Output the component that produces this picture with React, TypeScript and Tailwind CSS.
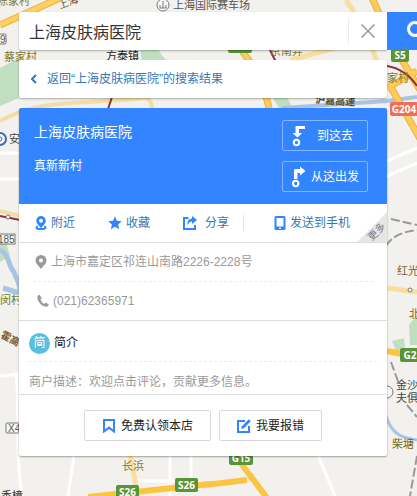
import type { ReactNode } from "react";

type IconProps = { className?: string };

function PlaceIcon({ className }: IconProps) {
  return (
    <svg viewBox="0 0 12 14" className={className} aria-hidden="true">
      <path
        fill="currentColor"
        fillRule="evenodd"
        d="M6 0a4.800 4.800 0 0 1 4.800 4.800C10.800 7.500 8 9.500 6 12 4 9.500 1.200 7.500 1.200 4.800A4.800 4.800 0 0 1 6 0Zm0 2.700a2 2 0 1 0 0 4 2 2 0 0 0 0-4Z"
      />
      <path fill="none" stroke="currentColor" strokeWidth="1.800" d="M3 10.300C.500 11 .500 13 6 13s5.500-2 3-2.700" />
    </svg>
  );
}

function StarIcon({ className }: IconProps) {
  return (
    <svg viewBox="0 0 14 14" className={className} aria-hidden="true">
      <path fill="currentColor" d="m7 .3 1.900 4.500 4.900.4-3.700 3.200 1.100 4.900L7 10.700l-4.200 2.600 1.100-4.900L.2 5.200l4.900-.4Z" />
    </svg>
  );
}

function ShareIcon({ className }: IconProps) {
  return (
    <svg viewBox="0 0 14 14" className={className} aria-hidden="true">
      <path fill="none" stroke="currentColor" strokeWidth="2" d="M5.500 2H1v11h11V9" />
      <path fill="currentColor" d="M9 0 14 4 9 8V5.500C7 5.500 5.700 6.500 4.500 9.500c-.5-4.500 1.500-6.500 4.500-6.900Z" />
    </svg>
  );
}

function PhoneScreenIcon({ className }: IconProps) {
  return (
    <svg viewBox="0 0 12 14" className={className} aria-hidden="true">
      <path fill="currentColor" fillRule="evenodd" d="M2 0h8a1.500 1.500 0 0 1 1.500 1.500v11A1.500 1.500 0 0 1 10 14H2a1.500 1.500 0 0 1-1.500-1.500v-11A1.500 1.500 0 0 1 2 0Zm.5 2v8.500h7V2ZM5 11.500v1.200h2v-1.200Z" />
    </svg>
  );
}

function PinIcon({ className }: IconProps) {
  return (
    <svg viewBox="0 0 12 14" className={className} aria-hidden="true">
      <path
        fill="currentColor"
        fillRule="evenodd"
        d="M6 0a5.500 5.500 0 0 1 5.500 5.500C11.500 8.500 8 11 6 14 4 11 .5 8.500.5 5.500A5.500 5.500 0 0 1 6 0Zm0 3.500a2 2 0 1 0 0 4 2 2 0 0 0 0-4Z"
      />
    </svg>
  );
}

function CallIcon({ className }: IconProps) {
  return (
    <svg viewBox="0 0 12 12" className={className} aria-hidden="true">
      <path
        fill="currentColor"
        d="M1.500.3C.7.800.2 1.700.4 2.900c.7 4.200 3.900 7.800 7.800 8.700 1.500.3 2.700-.2 3.400-1.400.2-.4.100-.7-.2-.9L9.200 7.800c-.3-.2-.6-.2-.9.100l-.9 1C5.500 8 4.200 6.300 3.500 4.400l.8-.7c.3-.3.400-.6.200-.9L3.100.5C2.800.0 2 .0 1.500.3Z"
      />
    </svg>
  );
}

function BookmarkIcon({ className }: IconProps) {
  return (
    <svg viewBox="0 0 14 14" className={className} aria-hidden="true">
      <path fill="none" stroke="currentColor" strokeWidth="2" d="M2 1h10v11.500L7 8.600l-5 3.900Z" />
    </svg>
  );
}

function EditIcon({ className }: IconProps) {
  return (
    <svg viewBox="0 0 14 14" className={className} aria-hidden="true">
      <path fill="none" stroke="currentColor" strokeWidth="2" d="M8 2H1v11h11V7" />
      <path fill="currentColor" d="M11.800.2 13.800 2.200 6.800 9.200l-2.700.800.800-2.700Z" />
    </svg>
  );
}

function ArriveIcon({ className }: IconProps) {
  return (
    <svg viewBox="0 0 16 22" className={className} aria-hidden="true">
      <path fill="currentColor" d="M5 1h9v3H8v4h3l-4.500 4.500L1.500 8H4.500V1.500Z" />
      <circle cx="5.500" cy="17.500" r="2.700" fill="none" stroke="currentColor" strokeWidth="2" />
    </svg>
  );
}

function DepartIcon({ className }: IconProps) {
  return (
    <svg viewBox="0 0 16 22" className={className} aria-hidden="true">
      <path fill="currentColor" d="M3 13V4l1-1h5V.5L14.500 5 9 9.500V7H6.500v6Z" />
      <circle cx="4.700" cy="17.500" r="2.700" fill="none" stroke="currentColor" strokeWidth="2" />
    </svg>
  );
}

const places = [
  { x: -3, y: 5, label: "陈家村", color: "#7d7a2e" },
  { x: 4, y: 61, label: "蔡家村", color: "#7d7a2e" },
  { x: 106, y: 60, label: "方泰镇", color: "#222222" },
  { x: 270, y: 55, label: "京南弄", color: "#7d7a2e" },
  { x: 387, y: 82, label: "家村", color: "#7d7a2e" },
  { x: 9, y: 143, label: "安亭", color: "#444444" },
  { x: 0, y: 304, label: "闵村", color: "#6f7a20" },
  { x: 397, y: 275, label: "红光", color: "#7d5f1e" },
  { x: 409, y: 318, label: "北", color: "#7d5f1e" },
  { x: 396, y: 389, label: "金沙", color: "#444444" },
  { x: 396, y: 402, label: "夫俱", color: "#444444" },
  { x: 392, y: 448, label: "柴塘", color: "#6f6820" },
  { x: 122, y: 470, label: "长浜", color: "#7d7a2e" },
  { x: 1, y: 500, label: "香樟", color: "#333333" },
];

const shields = [
  { x: 391, y: 48, w: 18, label: "S5", fill: "#599437" },
  { x: 228, y: 39, w: 24, label: "G15", fill: "#599437" },
  { x: 390, y: 102, w: 28, label: "G204", fill: "#ee6e58" },
  { x: 400, y: 348, w: 20, label: "G2", fill: "#599437" },
  { x: 116, y: 485, w: 23, label: "S26", fill: "#599437" },
  { x: 175, y: 478, w: 23, label: "S26", fill: "#599437" },
  { x: 229, y: 451, w: 24, label: "G15", fill: "#599437" },
];

function MapBackdrop() {
  return (
    <svg
      viewBox="0 0 417 496"
      preserveAspectRatio="xMinYMin slice"
      className="absolute inset-0 h-full w-full"
      aria-hidden="true"
    >
      <rect width="417" height="496" fill="#f3f1ee" />

      <g fill="#bfdfc0">
        <path d="M0 68 19 58v40L0 106Z" />
        <path d="M140 48h17l10 14h-25ZM272 96h14l8 14h-14Z" />
        <path d="M0 242h6l4 14-10 6ZM392 341l12-3 1 10-9 3ZM409 325l8-10v30h-7Z" />
      </g>
      <g fill="none" stroke="#a9c3e4" strokeWidth="5">
        <path d="M0 250c10 5 8 16 14 22 2 8 6 8 6 22M3 288l16 5" />
        <path d="M282 108 387 101l30-4" strokeWidth="4" />
        <path d="M386 416c6 20 18 22 31 24" strokeWidth="3" />
      </g>

      {/* minor roads */}
      <g fill="none" stroke="#ffffff" strokeWidth="3">
        <path d="M0 153h20M0 179h20M0 376l20-2M16 372c4 30-2 70 6 124M74 455l-6 41M170 455v41M191 455v26M318 455l17 41M387 161l30-13M387 176l30-13M135 481h40" />
      </g>

      {/* highways */}
      <g fill="none">
        <path d="M0 25 60-2" stroke="#efb13b" strokeWidth="7" />
        <path d="M0 25 60-2" stroke="#fdd063" strokeWidth="5" />
        <path d="M0 121C45 96 90 106 150 97M145 97q8 5 7 12M0 211l20 5" stroke="#f3dca5" strokeWidth="4" />
        <path d="M240 48l10 14M266 96l3 12M372-2l24 52 24 40M387 88l30-17M389 84l34 60" stroke="#ecb040" strokeWidth="7" />
        <path d="M240 48l10 14M266 96l3 12M372-2l24 52 24 40M387 88l30-17M389 84l34 60" stroke="#fccb5a" strokeWidth="5" />
        <path d="M346 0l8 12M372 48l5 14M290 60l45-12M387 288l30 4M130 455l8 41" stroke="#f8dfa0" strokeWidth="5" />
        <path d="M387 351l20 4M88 497 210 484M205 485l42-5M240 462l27 36" stroke="#fbc441" strokeWidth="6" />
      </g>
      <path d="M108 109l4-12M0 216l20 4M387 66c12 2 22 8 30 20M270 50l6 12" fill="none" stroke="#8b3140" strokeWidth="2" />

      {/* railways */}
      <g fill="none" stroke="#999999" strokeWidth="2" strokeDasharray="9 3">
        <path d="M386 246c6-10 16-14 31-16M391 219l26 6M391 362l8 22M407 405l10 12M417 456l-7 40" />
      </g>

      <g fill="#f8f8f8" stroke="#777777">
        <circle cx="163" cy="5" r="6" />
        <path d="M163 1v7m-3-3v3h6V5" fill="none" />
        <circle cx="0" cy="139" r="6" stroke="#3f6ca8" strokeWidth="2" />
        <circle cx="0" cy="139" r="2" stroke="#3f6ca8" />
        <circle cx="387" cy="392" r="6" />
        <circle cx="8" cy="217" r="2" />
        <circle cx="410" cy="290" r="2" />
        <rect x="-6" y="234" width="21" height="10" />
        <rect x="-5" y="34" width="11" height="10" rx="1" />
        <rect x="6" y="423" width="22" height="10" rx="1" />
      </g>

      <g className="font-['Liberation_Sans','Noto_Sans_CJK_SC',sans-serif] text-[10px]" fill="#555555">
        <text x="-2" y="243">185</text>
        <text x="0" y="43">9</text>
        <text x="8" y="432">X43</text>
        <text x="60" y="9" transform="rotate(-20 60 9)" fill="#5d4d28">上海</text>
        <text x="0" y="337" transform="rotate(28 0 337)" fill="#75592c" fontWeight="bold">霍高</text>
        <text x="315" y="103" transform="rotate(4 315 103)" fill="#5d4d28" fontWeight="bold">沪嘉高速</text>
      </g>

      <g className="font-['Noto_Sans_CJK_SC',sans-serif] text-[11px]">
        <text x="173" y="9" fill="#555555">上海国际赛车场</text>
        {places.map((place) => (
          <text key={place.label} x={place.x} y={place.y} fill={place.color}>
            {place.label}
          </text>
        ))}
      </g>

      <g className="font-['Open_Sans',sans-serif] text-[10px] font-bold" textAnchor="middle">
        {shields.map((shield) => (
          <g key={`${shield.x}-${shield.y}`}>
            <rect x={shield.x} y={shield.y} width={shield.w} height="14" rx="2" fill={shield.fill} />
            <text x={shield.x + shield.w / 2} y={shield.y + 11} fill="#ffffff">
              {shield.label}
            </text>
          </g>
        ))}
      </g>
    </svg>
  );
}

function ActionButton({ icon, children }: { icon: ReactNode; children: ReactNode }) {
  return (
    <button type="button" className="flex items-center gap-1 whitespace-nowrap text-[#3478b5]">
      {icon}
      {children}
    </button>
  );
}

function RouteButton({ icon, children }: { icon: ReactNode; children: ReactNode }) {
  return (
    <button
      type="button"
      className="flex h-[31px] w-[86px] items-center rounded-xs border border-[#84b6ff] pl-2 pr-1 text-white"
    >
      {icon}
      <span className="flex-1 text-center">{children}</span>
    </button>
  );
}

function FooterButton({ icon, children }: { icon: ReactNode; children: ReactNode }) {
  return (
    <button
      type="button"
      className="flex h-[31px] items-center gap-[5px] rounded-xs border border-[#d9d9d9] bg-white px-[17px] text-[#222222]"
    >
      {icon}
      {children}
    </button>
  );
}

function SearchBar() {
  return (
    <form className="-mr-[30px] flex h-[38px]" onSubmit={(event) => event.preventDefault()}>
      <div className="flex min-w-0 flex-1 items-center rounded-l-xs bg-white shadow-[0_1px_2px_rgba(0,0,0,0.3)]">
        <input
          type="text"
          aria-label="搜索地点"
          defaultValue="上海皮肤病医院"
          className="h-full min-w-0 flex-1 bg-transparent pl-[10px] text-base text-[#333333] outline-none"
        />
        <button
          type="button"
          aria-label="清除"
          className="flex h-[26px] w-[39px] items-center justify-center border-l border-[#ececec] text-[#999999]"
        >
          <svg viewBox="0 0 14 14" className="size-[14px]" aria-hidden="true">
            <path fill="none" stroke="currentColor" strokeWidth="1.500" d="m.5.5 13 13m0-13-13 13" />
          </svg>
        </button>
      </div>
      <button
        type="submit"
        aria-label="搜索"
        className="flex w-[30px] items-center overflow-hidden bg-[#3385ff] pl-5 text-white"
      >
        <svg viewBox="0 0 20 20" className="size-5 shrink-0" aria-hidden="true">
          <circle cx="8" cy="8" r="6.500" fill="none" stroke="currentColor" strokeWidth="3" />
          <path stroke="currentColor" strokeWidth="3" d="m13 13 6 6" />
        </svg>
      </button>
    </form>
  );
}

function PlaceCard() {
  return (
    <article className="rounded-xs bg-white shadow-[0_1px_2px_rgba(0,0,0,0.35)]">
      <header className="flex justify-between rounded-t-xs bg-[#3385ff] py-3 pl-[15px] pr-[19px] text-white">
        <div>
          <h1 className="text-sm leading-6">上海皮肤病医院</h1>
          <p className="mt-3 leading-5">真新新村</p>
        </div>
        <div className="flex flex-col gap-[10px]">
          <RouteButton icon={<ArriveIcon className="h-[22px] w-4" />}>到这去</RouteButton>
          <RouteButton icon={<DepartIcon className="h-[22px] w-4" />}>从这出发</RouteButton>
        </div>
      </header>

      <div className="relative flex h-[39px] items-center border-b border-[#dddddd] pl-4">
        <div className="flex flex-1 gap-[33px] border-r border-[#e5e5e5]">
          <ActionButton icon={<PlaceIcon className="h-[14px] w-3 text-[#3385ff]" />}>附近</ActionButton>
          <ActionButton icon={<StarIcon className="size-[14px] text-[#3385ff]" />}>收藏</ActionButton>
          <ActionButton icon={<ShareIcon className="mr-1 size-[14px] text-[#3385ff]" />}>分享</ActionButton>
        </div>
        <div className="w-[143px] pl-[30px]">
          <ActionButton icon={<PhoneScreenIcon className="h-[14px] w-3 text-[#3385ff]" />}>发送到手机</ActionButton>
        </div>
        <button
          type="button"
          className="absolute bottom-0 right-0 size-[30px] bg-[#e6e6e6] text-[10px] leading-3 text-[#777777] [clip-path:polygon(100%_0,100%_100%,0_100%)]"
        >
          <span className="absolute bottom-1 right-0 -rotate-45 whitespace-nowrap">更多</span>
        </button>
      </div>

      <address className="px-[14px] not-italic text-[#999999]">
        <p className="flex h-[39px] items-center gap-1 border-b border-dashed border-[#ececec] pl-[2px]">
          <PinIcon className="h-[14px] w-3 shrink-0" />
          上海市嘉定区祁连山南路2226-2228号
        </p>
        <p className="flex h-[38px] items-center gap-1 pl-1">
          <CallIcon className="size-3 shrink-0" />
          (021)62365971
        </p>
      </address>

      <section className="border-y border-[#dddddd] px-[10px]">
        <h2 className="flex h-[41px] items-center gap-1 border-b border-dashed border-[#ececec] pt-1 text-[#222222]">
          <span className="flex size-[21px] items-center justify-center rounded-full bg-[#5bbfde] text-white">简</span>
          简介
        </h2>
        <p className="h-8 pt-[10px] leading-5 text-[#999999]">商户描述：欢迎点击评论，贡献更多信息。</p>
      </section>

      <footer className="flex justify-center gap-2 py-[15px]">
        <FooterButton icon={<BookmarkIcon className="size-[14px] text-[#3385ff]" />}>免费认领本店</FooterButton>
        <FooterButton icon={<EditIcon className="size-[14px] text-[#3385ff]" />}>我要报错</FooterButton>
      </footer>
    </article>
  );
}

export default function App() {
  return (
    <div className="relative min-h-screen overflow-hidden font-['Liberation_Sans','Noto_Sans_CJK_SC',sans-serif] text-xs">
      <MapBackdrop />
      <main className="relative flex flex-col gap-[10px] pb-10 pl-[19px] pr-[30px] pt-3">
        <SearchBar />
        <nav className="flex h-[38px] items-center rounded-xs bg-white pl-3 shadow-[0_1px_2px_rgba(0,0,0,0.3)]">
          <a href="#results" className="flex items-center gap-[10px] text-[#3478b5]">
            <svg viewBox="0 0 6 10" className="h-[10px] w-[6px]" aria-hidden="true">
              <path fill="none" stroke="currentColor" strokeWidth="2" d="M5 1 1 5l4 4" />
            </svg>
            返回“上海皮肤病医院”的搜索结果
          </a>
        </nav>
        <PlaceCard />
      </main>
    </div>
  );
}
